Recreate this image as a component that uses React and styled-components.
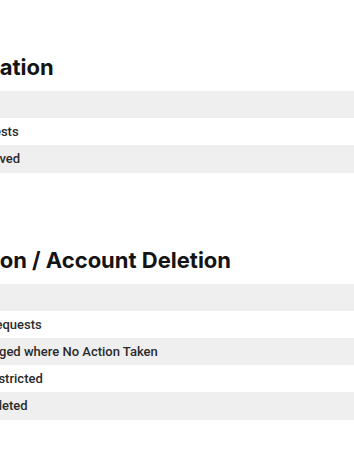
import React from "react";
import styled, { createGlobalStyle } from "styled-components";

const GlobalStyle = createGlobalStyle`
  body {
    margin: 0;
    background: #ffffff;
    font-family: Roboto, "Noto Sans", sans-serif;
    overflow: hidden;
  }
`;

const Page = styled.div`
  width: 354px;
  height: 472px;
  overflow: hidden;
`;

// the report is wider than the viewport and is scrolled to its right part
const Content = styled.div`
  margin-left: -186px;
  width: 720px;
  padding-top: 53px;
  display: flex;
  flex-direction: column;
  gap: 73px;
`;

const Section = styled.section`
  display: flex;
  flex-direction: column;
  gap: 10px;
`;

const Title = styled.h2`
  margin: 0;
  font-family: Inter, "Noto Sans", sans-serif;
  font-size: 22px;
  line-height: 28px;
  font-weight: 700;
  color: #141414;
  white-space: nowrap;
`;

const Table = styled.div`
  display: flex;
  flex-direction: column;
`;

const Row = styled.div`
  display: flex;
  align-items: center;
  height: 27.2px;
  background: ${(p) => (p.$shaded ? "#efefef" : "#ffffff")};
  font-size: 13px;
  font-weight: ${(p) => (p.$head ? 700 : 500)};
  color: #2b2b2b;
  white-space: nowrap;
`;

const Index = styled.span`
  width: 99px;
  padding-left: 12px;
  box-sizing: border-box;
`;

const Label = styled.span`
  flex: 1;
  padding-left: 12px;
`;

const sections = [
  {
    title: "Orders for Information",
    rows: ["Police Requests", "Orders Received"],
  },
  {
    title: "Account Restriction / Account Deletion",
    rows: [
      "Total User Requests",
      "Content Flagged where No Action Taken",
      "Accounts Restricted",
      "Accounts Deleted",
    ],
  },
];

export default function App() {
  return (
    <Page>
      <GlobalStyle />
      <Content>
        {sections.map((s) => (
          <Section key={s.title}>
            <Title>{s.title}</Title>
            <Table>
              <Row $shaded $head>
                <Index>S.No.</Index>
                <Label>Particulars</Label>
              </Row>
              {s.rows.map((label, i) => (
                <Row key={label} $shaded={i % 2 === 1}>
                  <Index>{i + 1}</Index>
                  <Label>{label}</Label>
                </Row>
              ))}
            </Table>
          </Section>
        ))}
      </Content>
    </Page>
  );
}
